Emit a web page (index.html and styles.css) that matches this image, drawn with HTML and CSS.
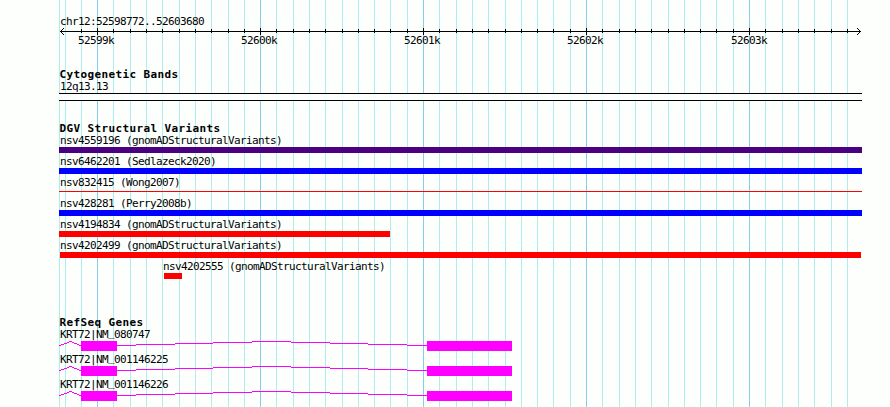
FILE: index.html
```
<!DOCTYPE html>
<html lang="en">
<head>
    <meta charset="UTF-8">
    <title>chr12:52598772..52603680</title>
    <link rel="stylesheet" href="styles.css">
</head>
<body>
    <div class="browser">
        <!-- Grid lines behind the tracks -->
        <svg class="grid" width="890" height="407" shape-rendering="crispEdges">
            <path class="grid-minor" d="M59.5 0v407M65.5 0v407M81.5 0v407M113.5 0v407M130.5 0v407M146.5 0v407M162.5 0v407M179.5 0v407M195.5 0v407M211.5 0v407M228.5 0v407M244.5 0v407M276.5 0v407M293.5 0v407M309.5 0v407M325.5 0v407M342.5 0v407M358.5 0v407M374.5 0v407M390.5 0v407M407.5 0v407M439.5 0v407M456.5 0v407M472.5 0v407M488.5 0v407M505.5 0v407M521.5 0v407M537.5 0v407M553.5 0v407M570.5 0v407M602.5 0v407M619.5 0v407M635.5 0v407M651.5 0v407M668.5 0v407M684.5 0v407M700.5 0v407M716.5 0v407M733.5 0v407M765.5 0v407M782.5 0v407M798.5 0v407M814.5 0v407M831.5 0v407M847.5 0v407"/>
            <path class="grid-major" d="M97.5 0v407M260.5 0v407M423.5 0v407M586.5 0v407M749.5 0v407"/>
        </svg>

        <main class="tracks">
            <!-- Ruler -->
            <section class="ruler">
                <div class="label">chr12:52598772..52603680</div>
                <svg class="scale" width="803" height="7" viewBox="59 28 803 7" shape-rendering="crispEdges">
                    <path d="M60 31.5H861"/>
                    <path d="M81.5 29v4M113.5 29v4M130.5 29v4M146.5 29v4M162.5 29v4M179.5 29v4M195.5 29v4M211.5 29v4M228.5 29v4M244.5 29v4M276.5 29v4M293.5 29v4M309.5 29v4M325.5 29v4M342.5 29v4M358.5 29v4M374.5 29v4M390.5 29v4M407.5 29v4M439.5 29v4M456.5 29v4M472.5 29v4M488.5 29v4M505.5 29v4M521.5 29v4M537.5 29v4M553.5 29v4M570.5 29v4M602.5 29v4M619.5 29v4M635.5 29v4M651.5 29v4M668.5 29v4M684.5 29v4M700.5 29v4M716.5 29v4M733.5 29v4M765.5 29v4M782.5 29v4M798.5 29v4M814.5 29v4M831.5 29v4M847.5 29v4"/>
                    <path d="M97.5 28v7M260.5 28v7M423.5 28v7M586.5 28v7M749.5 28v7"/>
                    <path class="arrow" d="M60 31h1v1h-1zM61 30h1v1h-1zM61 32h1v1h-1zM62 29h1v1h-1zM62 33h1v1h-1zM63 28h1v1h-1zM63 34h1v1h-1zM860 31h1v1h-1zM859 30h1v1h-1zM859 32h1v1h-1zM858 29h1v1h-1zM858 33h1v1h-1zM857 28h1v1h-1zM857 34h1v1h-1z"/>
                </svg>
                <div class="ticks">
                    <span>52599k</span>
                    <span>52600k</span>
                    <span>52601k</span>
                    <span>52602k</span>
                    <span>52603k</span>
                </div>
            </section>

            <!-- Cytogenetic bands -->
            <section class="cyto">
                <h2>Cytogenetic Bands</h2>
                <div class="label">12q13.13</div>
                <div class="band"></div>
            </section>

            <!-- Structural variants -->
            <section class="variants">
                <h2>DGV Structural Variants</h2>
                <div class="variant">
                    <div class="label">nsv4559196 (gnomADStructuralVariants)</div>
                    <div class="bar complex"></div>
                </div>
                <div class="variant">
                    <div class="label">nsv6462201 (Sedlazeck2020)</div>
                    <div class="bar gain"></div>
                </div>
                <div class="variant">
                    <div class="label">nsv832415 (Wong2007)</div>
                    <div class="bar loss thin"></div>
                </div>
                <div class="variant">
                    <div class="label">nsv428281 (Perry2008b)</div>
                    <div class="bar gain"></div>
                </div>
                <div class="variant">
                    <div class="label">nsv4194834 (gnomADStructuralVariants)</div>
                    <div class="bar loss partial"></div>
                </div>
                <div class="variant">
                    <div class="label">nsv4202499 (gnomADStructuralVariants)</div>
                    <div class="bar loss inset"></div>
                </div>
                <div class="variant shifted">
                    <div class="label">nsv4202555 (gnomADStructuralVariants)</div>
                    <div class="bar loss short"></div>
                </div>
            </section>

            <!-- Genes -->
            <section class="genes">
                <h2>RefSeq Genes</h2>
                <svg class="defs" width="0" height="0">
                    <symbol id="transcript" viewBox="59 0 803 12">
                        <path class="intron" d="M59 4.5h2M61 3.5h3M64 2.5h3M67 1.5h2M69 0.5h3M72 1.5h2M74 2.5h3M77 3.5h2M79 4.5h2M117 4.5h19M136 3.5h39M175 2.5h38M213 1.5h39M252 0.5h39M291 1.5h39M330 2.5h38M368 3.5h39M407 4.5h20"/>
                        <path class="exon" d="M81 0h36v10H81zM427 0h85v10h-85z"/>
                    </symbol>
                </svg>
                <div class="gene">
                    <div class="label">KRT72|NM<span class="raised">_</span>080747</div>
                    <svg width="803" height="12" shape-rendering="crispEdges"><use href="#transcript"/></svg>
                </div>
                <div class="gene">
                    <div class="label">KRT72|NM<span class="raised">_</span>001146225</div>
                    <svg width="803" height="12" shape-rendering="crispEdges"><use href="#transcript"/></svg>
                </div>
                <div class="gene">
                    <div class="label">KRT72|NM<span class="raised">_</span>001146226</div>
                    <svg width="803" height="12" shape-rendering="crispEdges"><use href="#transcript"/></svg>
                </div>
            </section>
        </main>
    </div>
</body>
</html>
```
FILE: styles.css
```
* {
    margin: 0;
    padding: 0;
    box-sizing: border-box;
}

body {
    background-color: #fdfffc;
    color: #000;
    font-family: "DejaVu Sans Mono", monospace;
    font-size: 11px;
    line-height: 13px;
    overflow: hidden;
}

svg {
    display: block;
}

.browser {
    position: relative;
    width: 890px;
    height: 407px;
    overflow: hidden;
}

/* Grid lines */
.grid {
    position: absolute;
    top: 0;
    left: 0;
}

.grid-minor {
    stroke: #afeeee;
}

.grid-major {
    stroke: #87ceeb;
}

.tracks {
    position: relative;
    width: 862px;
    padding: 15px 0 0 59px;
}

/* 6px cells for labels, 7px cells for track titles */
.label,
.ticks {
    height: 13px;
    letter-spacing: -0.622px;
    white-space: pre;
}

.label {
    padding-left: 1px;
}

/* keeps the underscore clear of the exon below it */
.raised {
    vertical-align: 2px;
    line-height: 0;
}

h2 {
    height: 12px;
    padding-left: 0.5px;
    font-size: 11px;
    font-weight: bold;
    letter-spacing: 0.378px;
}

/* Ruler */
.ruler {
    height: 53px;
}

.scale {
    stroke: #000;
}

.scale .arrow {
    fill: #000;
    stroke: none;
}

.ticks {
    display: flex;
    gap: 127px;
    margin-top: -1px;
    padding-left: 19px;
}

.ticks span {
    width: 36px;
}

.ticks span:last-child {
    margin-left: 1px;
}

/* Cytogenetic bands */
.cyto {
    height: 54px;
}

.band {
    height: 8px;
    border-top: 1px solid #000;
    border-bottom: 1px solid #000;
    background-color: #fdfffc;
}

/* Structural variants */
.variants {
    height: 194px;
}

.variant {
    height: 21px;
}

.bar {
    height: 6px;
}

.complex {
    background-color: #4b0082;
}

.gain {
    background-color: #0000ff;
}

.loss {
    background-color: #ff0000;
}

.thin {
    height: 1px;
    margin-top: 2px;
}

.partial {
    width: 331px;
}

.inset {
    margin: 0 1px;
}

.shifted {
    padding-left: 103px;
}

.short {
    width: 18px;
    margin-left: 2px;
}

/* Genes */
.defs {
    position: absolute;
}

.gene {
    height: 25px;
}

.intron {
    stroke: #ff00ff;
}

.exon {
    fill: #ff00ff;
}
```
